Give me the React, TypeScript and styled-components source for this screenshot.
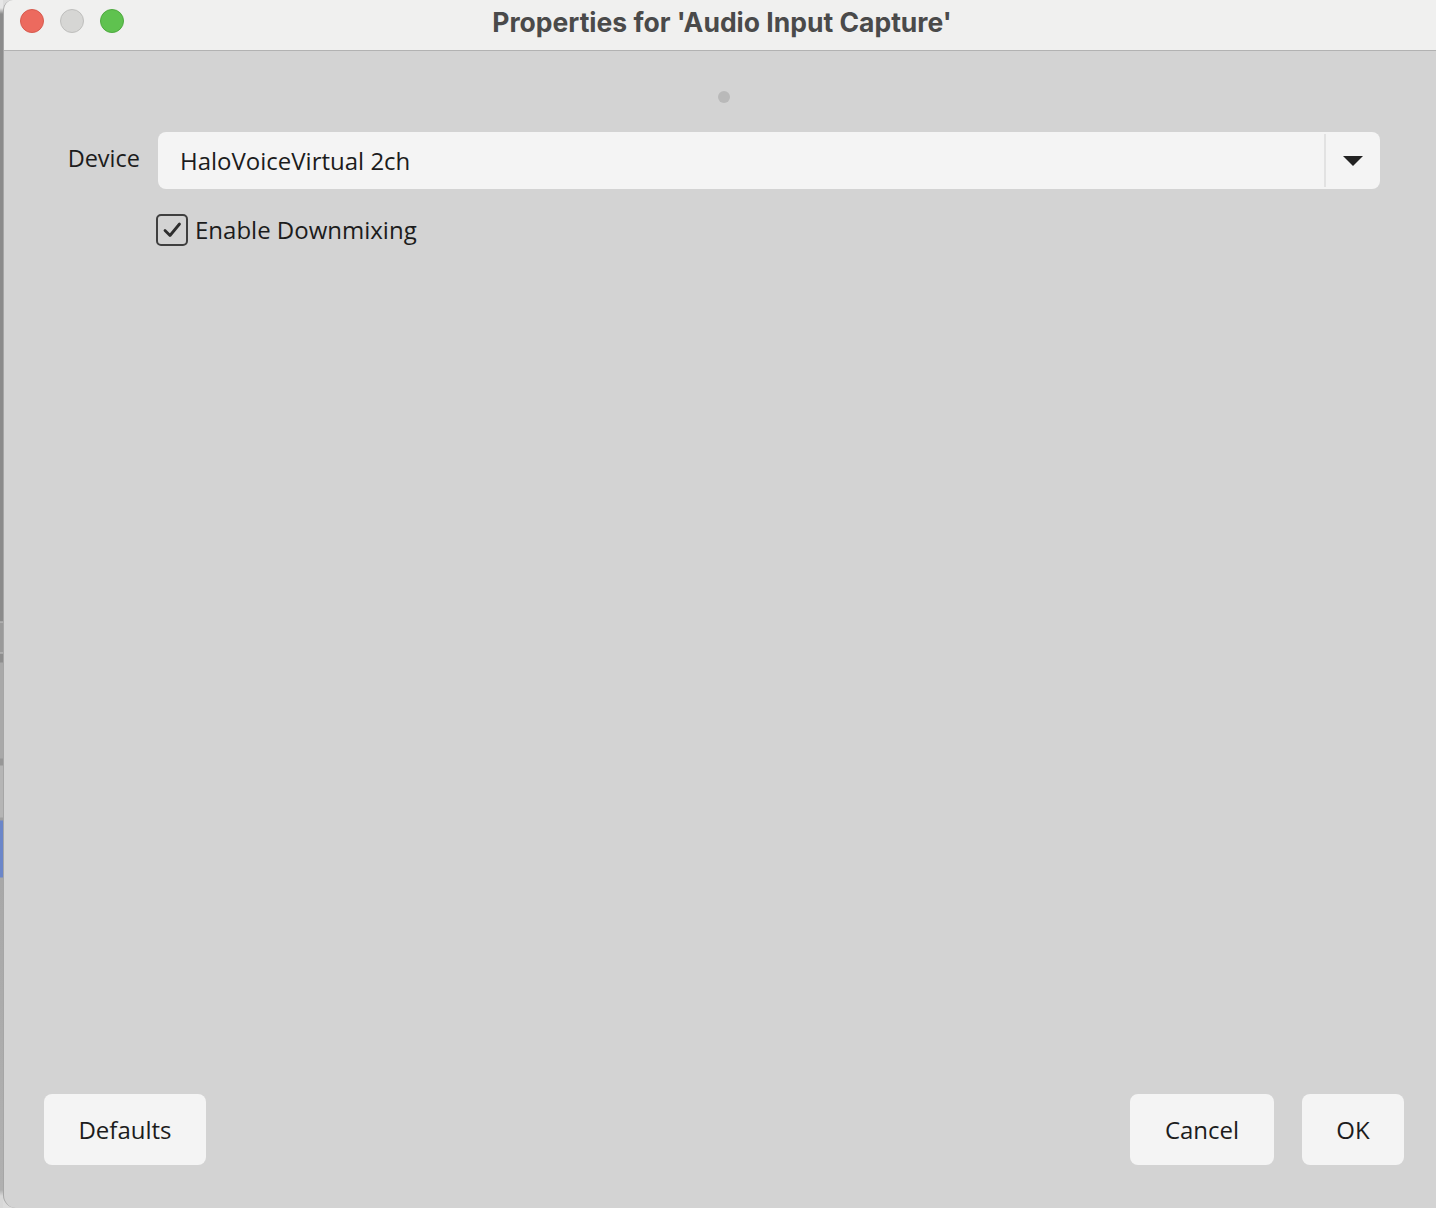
import styled, { createGlobalStyle } from 'styled-components';

const GlobalStyle = createGlobalStyle`
  html, body {
    margin: 0;
    padding: 0;
    background: #d3d3d3;
  }
  body {
    font-family: "Open Sans", "Noto Sans", sans-serif;
  }
`;

const Screen = styled.div`
  display: flex;
  width: 1436px;
  height: 1208px;
  overflow: hidden;
  background: #dcdcdc;
`;

// the app window peeking out behind the dialog on the left edge
const BehindStrip = styled.div`
  width: 3px;
  flex-shrink: 0;
  background: linear-gradient(
    to bottom,
    #e6e6e6 0px,
    #e6e6e6 8px,
    #8b8b8b 14px,
    #8b8b8b 621px,
    #c4c4c4 622px,
    #9a9a9a 623px,
    #9a9a9a 652px,
    #c4c4c4 653px,
    #8e8e8e 654px,
    #8e8e8e 662px,
    #a9a9a9 663px,
    #a9a9a9 758px,
    #979797 759px,
    #979797 765px,
    #b5b5b5 766px,
    #b5b5b5 817px,
    #a0a0a0 818px,
    #a0a0a0 820px,
    #6b86c9 821px,
    #6b86c9 877px,
    #a8a8a8 878px,
    #b0b0b0 1190px,
    #d8d8d8 1196px
  );
`;

const Window = styled.div`
  flex: 1;
  display: flex;
  flex-direction: column;
  background: #d3d3d3;
  border-left: 1px solid #a6a6a6;
  border-radius: 10px 0 0 13px;
  overflow: hidden;
`;

const TitleBar = styled.div`
  position: relative;
  height: 50px;
  flex-shrink: 0;
  display: flex;
  align-items: center;
  justify-content: center;
  background: #f0f0ef;
  border-bottom: 1px solid #b2b2b2;
`;

const Lights = styled.div`
  position: absolute;
  left: 16px;
  top: 9px;
  display: flex;
  gap: 16px;
`;

const Light = styled.span<{ $fill: string; $edge: string }>`
  width: 24px;
  height: 24px;
  border-radius: 50%;
  box-sizing: border-box;
  background: ${(p) => p.$fill};
  border: 1px solid ${(p) => p.$edge};
`;

const Title = styled.div`
  font-family: Inter, "Open Sans", sans-serif;
  font-weight: 700;
  font-size: 26.5px;
  color: #4a4a4a;
  margin: -7px 0 0 4px;
`;

const Content = styled.div`
  flex: 1;
  display: flex;
  flex-direction: column;
  padding: 40px 56px 43px 0;
`;

const Grip = styled.div`
  width: 12px;
  height: 12px;
  border-radius: 50%;
  background: #b9b9b9;
  align-self: center;
  margin-left: 64px;
`;

const Form = styled.div`
  display: grid;
  grid-template-columns: 154px 1fr;
  row-gap: 25px;
  margin-top: 29px;
`;

const Label = styled.div`
  align-self: center;
  text-align: right;
  padding-right: 18px;
  margin-top: -6px;
  font-size: 23.5px;
  color: #1c1c1c;
`;

const Combo = styled.div`
  height: 57px;
  display: flex;
  align-items: stretch;
  background: #f4f4f4;
  border-radius: 8px;
`;

const ComboText = styled.div`
  flex: 1;
  display: flex;
  align-items: center;
  padding-left: 22px;
  font-size: 24px;
  color: #1c1c1c;
`;

const ComboButton = styled.div`
  width: 54px;
  display: flex;
  align-items: center;
  justify-content: center;
  border-left: 2px solid #e2e2e2;
  margin: 2px 0;
`;

const CheckRow = styled.label`
  grid-column: 2;
  display: flex;
  align-items: center;
  gap: 7px;
  margin-left: -2px;
  font-size: 24px;
  line-height: 30px;
  color: #1c1c1c;
`;

const Box = styled.span`
  width: 32px;
  height: 32px;
  box-sizing: border-box;
  border: 2px solid #3f3f3f;
  border-radius: 5px;
  display: flex;
  align-items: center;
  justify-content: center;
`;

const Spacer = styled.div`
  flex: 1;
`;

const ButtonBar = styled.div`
  display: flex;
  align-items: center;
  gap: 28px;
  padding-left: 40px;
  margin-right: -24px;
`;

const Button = styled.button<{ $w: number }>`
  width: ${(p) => p.$w}px;
  height: 71px;
  border: none;
  border-radius: 8px;
  background: #f4f4f4;
  font-family: "Open Sans", "Noto Sans", sans-serif;
  font-size: 24px;
  color: #1c1c1c;
  padding: 0;
  &:first-child {
    margin-right: auto;
  }
`;

export default function App() {
  return (
    <>
      <GlobalStyle />
      <Screen>
        <BehindStrip />
        <Window>
          <TitleBar>
            <Lights>
              <Light $fill="#ec6a5e" $edge="#d65a4e" />
              <Light $fill="#d6d6d4" $edge="#bebebc" />
              <Light $fill="#5fc24f" $edge="#4ea93f" />
            </Lights>
            <Title>Properties for 'Audio Input Capture'</Title>
          </TitleBar>
          <Content>
            <Grip />
            <Form>
              <Label>Device</Label>
              <Combo>
                <ComboText>HaloVoiceVirtual 2ch</ComboText>
                <ComboButton>
                  <svg width="20" height="10" viewBox="0 0 20 10">
                    <path d="M0 0 H20 L10 10 Z" fill="#222" />
                  </svg>
                </ComboButton>
              </Combo>
              <CheckRow>
                <Box>
                  <svg width="22" height="22" viewBox="0 0 22 22">
                    <path
                      d="M4 11.5 L9 16.5 L18.5 5"
                      fill="none"
                      stroke="#2e2e2e"
                      strokeWidth="2.8"
                      strokeLinecap="round"
                      strokeLinejoin="round"
                    />
                  </svg>
                </Box>
                Enable Downmixing
              </CheckRow>
            </Form>
            <Spacer />
            <ButtonBar>
              <Button $w={162}>Defaults</Button>
              <Button $w={144}>Cancel</Button>
              <Button $w={102}>OK</Button>
            </ButtonBar>
          </Content>
        </Window>
      </Screen>
    </>
  );
}
